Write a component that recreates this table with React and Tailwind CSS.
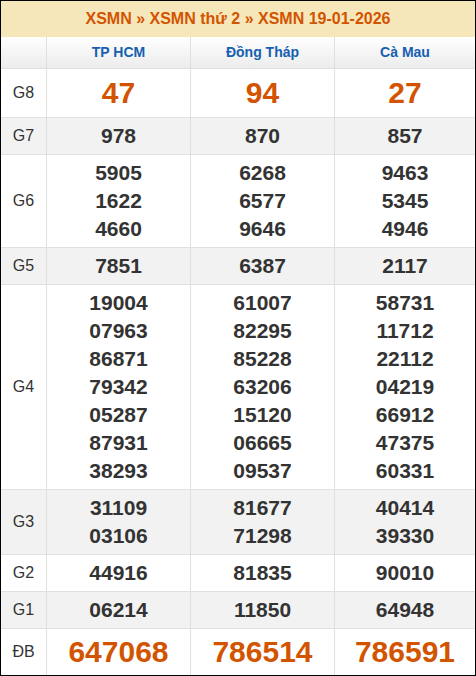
import React from "react";

const cities = ["TP HCM", "Đồng Tháp", "Cà Mau"];
const rows = [
  { label: "G8", big: true, lh: "leading-[40px]", bg: "bg-white", vals: [["47"], ["94"], ["27"]] },
  { label: "G7", bg: "bg-[#f2f2f2]", vals: [["978"], ["870"], ["857"]] },
  { label: "G6", bg: "bg-white", vals: [["5905", "1622", "4660"], ["6268", "6577", "9646"], ["9463", "5345", "4946"]] },
  { label: "G5", bg: "bg-[#f2f2f2]", vals: [["7851"], ["6387"], ["2117"]] },
  {
    label: "G4",
    bg: "bg-white",
    vals: [
      ["19004", "07963", "86871", "79342", "05287", "87931", "38293"],
      ["61007", "82295", "85228", "63206", "15120", "06665", "09537"],
      ["58731", "11712", "22112", "04219", "66912", "47375", "60331"],
    ],
  },
  { label: "G3", bg: "bg-[#f2f2f2]", vals: [["31109", "03106"], ["81677", "71298"], ["40414", "39330"]] },
  { label: "G2", bg: "bg-white", vals: [["44916"], ["81835"], ["90010"]] },
  { label: "G1", bg: "bg-[#f2f2f2]", vals: [["06214"], ["11850"], ["64948"]] },
  { label: "ĐB", big: true, last: true, lh: "leading-[38px]", bg: "bg-white", vals: [["647068"], ["786514"], ["786591"]] },
];

export default function App() {
  return (
    <div
      className="w-[476px] h-[676px] border border-black bg-white overflow-hidden"
      style={{ fontFamily: '"Liberation Sans", Arial, sans-serif' }}
    >
      <div className="h-[36px] bg-[#f6e7bb] flex items-center justify-center text-[16px] font-bold text-[#d35400]">
        XSMN » XSMN thứ 2 » XSMN 19-01-2026
      </div>
      <div className="grid grid-cols-[45px_144px_144px_141px] h-[32px] border-b border-[#e0e0e0] bg-gradient-to-b from-white to-[#ececec]">
        <div />
        {cities.map((c) => (
          <div key={c} className="border-l border-[#e0e0e0] flex items-center justify-center text-[14px] font-bold text-[#1560b0]">
            {c}
          </div>
        ))}
      </div>
      {rows.map((r) => (
        <div
          key={r.label}
          className={`grid grid-cols-[45px_144px_144px_141px] ${r.bg} ${r.last ? "" : "border-b border-[#e0e0e0]"}`}
        >
          <div className="flex items-center justify-center text-[16px] text-[#333]">{r.label}</div>
          {r.vals.map((v, i) => (
            <div key={i} className="border-l border-[#e0e0e0] py-[4px] flex flex-col items-center justify-center">
              {v.map((n, j) => (
                <div
                  key={j}
                  className={
                    r.big
                      ? `${r.lh} text-[30px] font-bold text-[#d35400]`
                      : "leading-[28px] text-[21px] font-bold text-[#333]"
                  }
                >
                  {n}
                </div>
              ))}
            </div>
          ))}
        </div>
      ))}
    </div>
  );
}
